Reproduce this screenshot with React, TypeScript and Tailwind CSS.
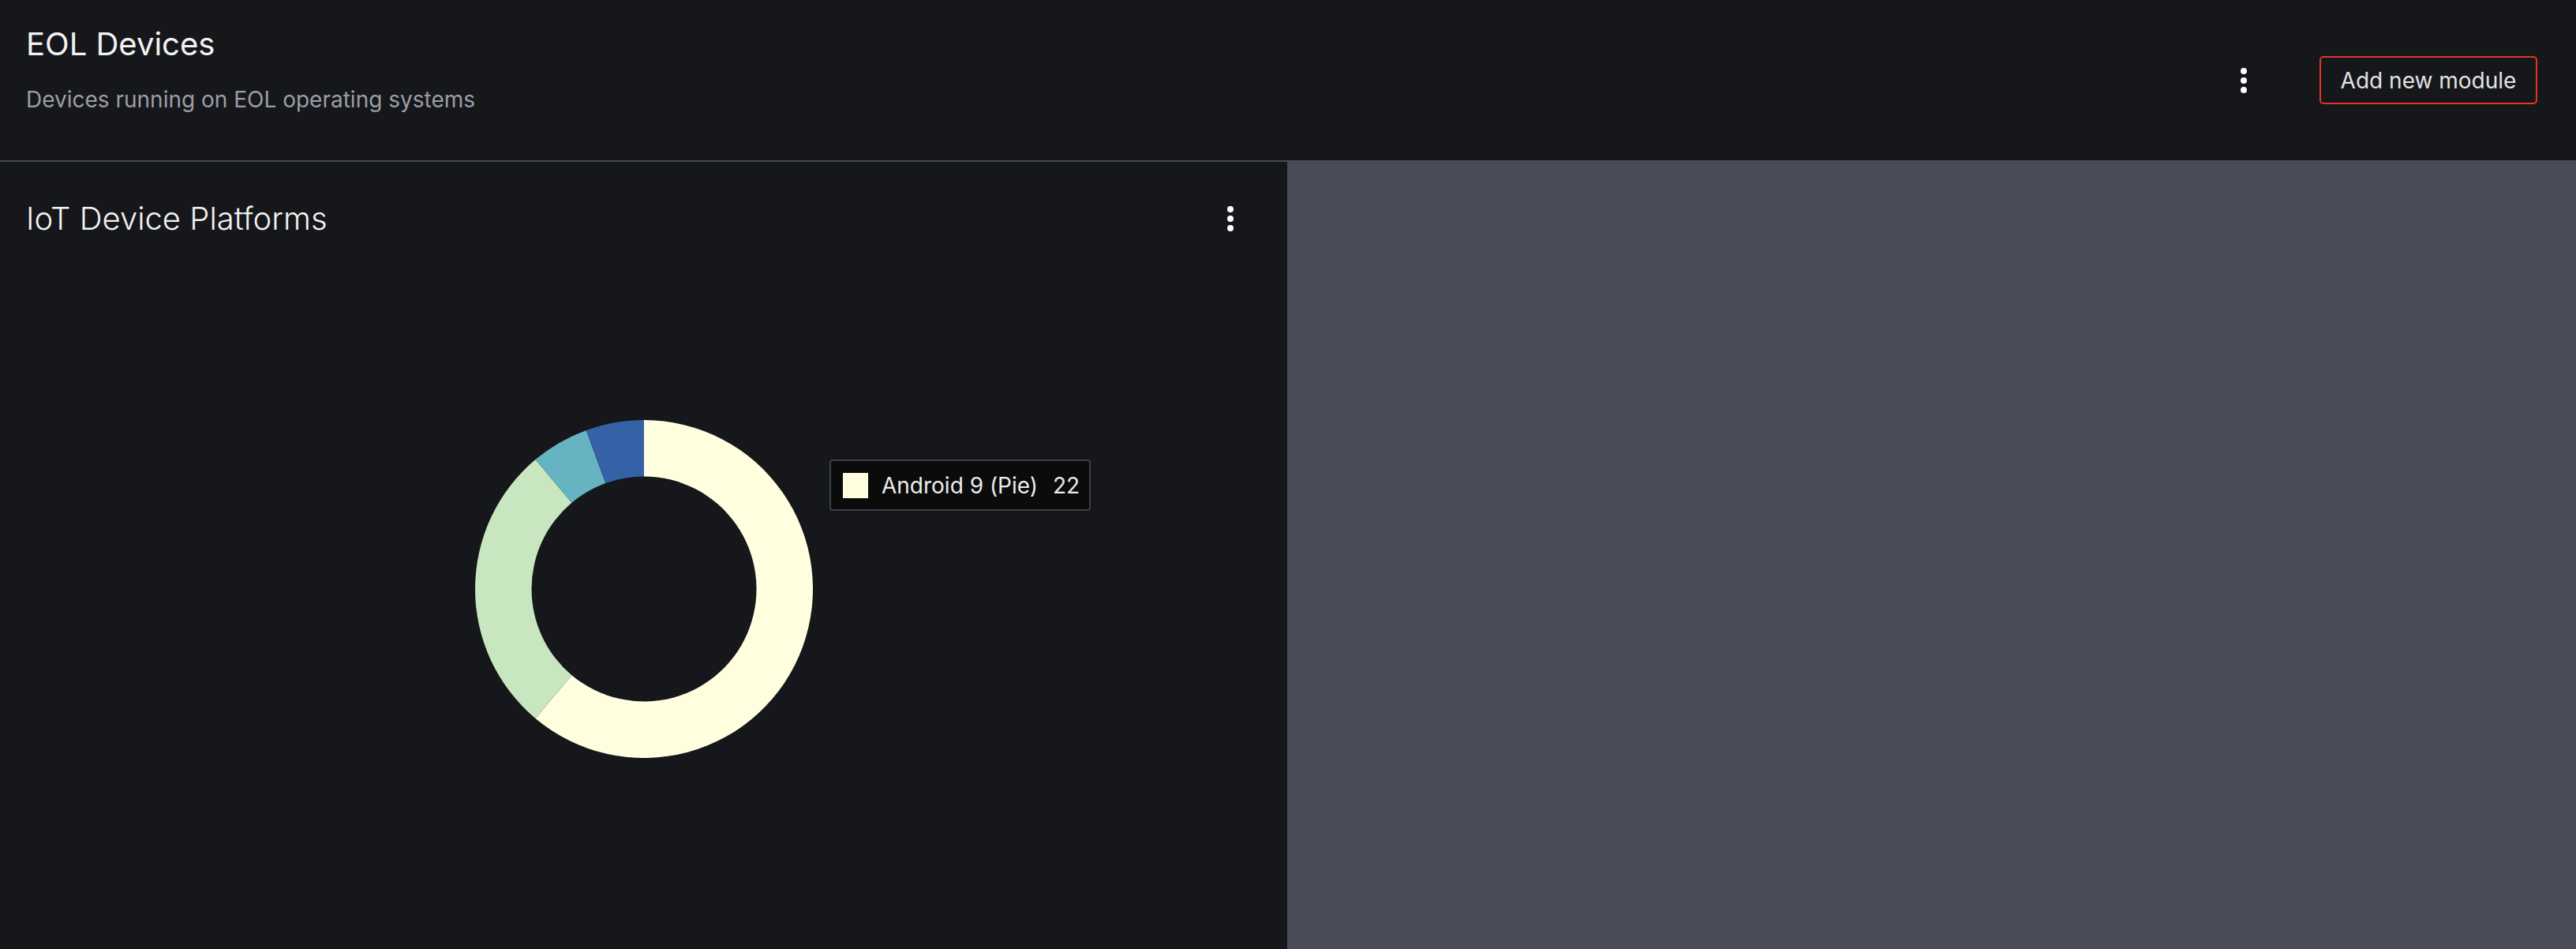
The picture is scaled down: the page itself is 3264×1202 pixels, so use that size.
import React from "react";

const slices = [
  { label: "Android 9 (Pie)", value: 22, color: "#ffffe0" },
  { label: "Android 8", value: 10, color: "#c8e6c0" },
  { label: "Android 7", value: 2, color: "#66b3c1" },
  { label: "Android 6", value: 2, color: "#3561a6" },
];

function KebabIcon() {
  return (
    <svg width="48" height="48" viewBox="0 0 24 24" fill="#ffffff">
      <circle cx="12" cy="6" r="2" />
      <circle cx="12" cy="12" r="2" />
      <circle cx="12" cy="18" r="2" />
    </svg>
  );
}

function Donut() {
  const size = 428;
  const c = size / 2;
  const ro = 214;
  const ri = 142.5;
  const total = slices.reduce((s, x) => s + x.value, 0);
  const pt = (a: number, r: number) => {
    const rad = (a * Math.PI) / 180;
    return [c + r * Math.sin(rad), c - r * Math.cos(rad)];
  };
  let acc = 0;
  return (
    <svg width={size} height={size} viewBox={`0 0 ${size} ${size}`}>
      {slices.map((s) => {
        const a0 = (acc / total) * 360;
        acc += s.value;
        const a1 = (acc / total) * 360;
        const large = a1 - a0 > 180 ? 1 : 0;
        const [x0, y0] = pt(a0, ro);
        const [x1, y1] = pt(a1, ro);
        const [x2, y2] = pt(a1, ri);
        const [x3, y3] = pt(a0, ri);
        const d = `M${x0} ${y0} A${ro} ${ro} 0 ${large} 1 ${x1} ${y1} L${x2} ${y2} A${ri} ${ri} 0 ${large} 0 ${x3} ${y3} Z`;
        return <path key={s.label} d={d} fill={s.color} />;
      })}
    </svg>
  );
}

export default function App() {
  return (
    <div className="h-[1202px] w-full bg-[#484c59] flex flex-col gap-[2px] font-['Inter',sans-serif] overflow-hidden">
      <header className="h-[203px] shrink-0 bg-[#16171b] flex items-center justify-between pl-[33px] pr-[49px]">
        <div className="self-start pt-[32px]">
          <h1 className="text-[40px] leading-[48px] font-normal text-[#f2f2f2]">EOL Devices</h1>
          <p className="mt-[26px] text-[28px] leading-[40px] text-[#9b9ea6]">
            Devices running on EOL operating systems
          </p>
        </div>
        <div className="flex items-center">
          <KebabIcon />
          <button className="ml-[72px] w-[276px] h-[61px] flex items-center justify-center border-2 border-[#e0352b] rounded-[5px] text-[28px] text-[#e3e3e3]">
            Add new module
          </button>
        </div>
      </header>
      <div className="flex-1 grid grid-cols-2 gap-[2px]">
        <section className="bg-[#16171b] flex flex-col">
          <div className="h-[144px] shrink-0 flex items-start justify-between pl-[33px] pr-[48px] pt-[48px]">
            <h2 className="text-[40px] leading-[48px] font-light text-[#f2f2f2]">IoT Device Platforms</h2>
            <KebabIcon />
          </div>
          <div className="relative h-[794px] flex items-center justify-center">
            <Donut />
            <div className="absolute left-[1051px] top-[233px] h-[65px] flex items-center border-2 border-[#3c3f48] rounded-[4px] bg-[#0b0b0c] pl-[15px] pr-[12px]">
              <span className="w-[32px] h-[32px] bg-[#ffffe0]" />
              <span className="ml-[17px] text-[28px] leading-[34px] text-[#ebebeb]">Android 9 (Pie)</span>
              <span className="ml-[19px] text-[28px] leading-[34px] text-[#ebebeb]">22</span>
            </div>
          </div>
        </section>
        <div />
      </div>
    </div>
  );
}
